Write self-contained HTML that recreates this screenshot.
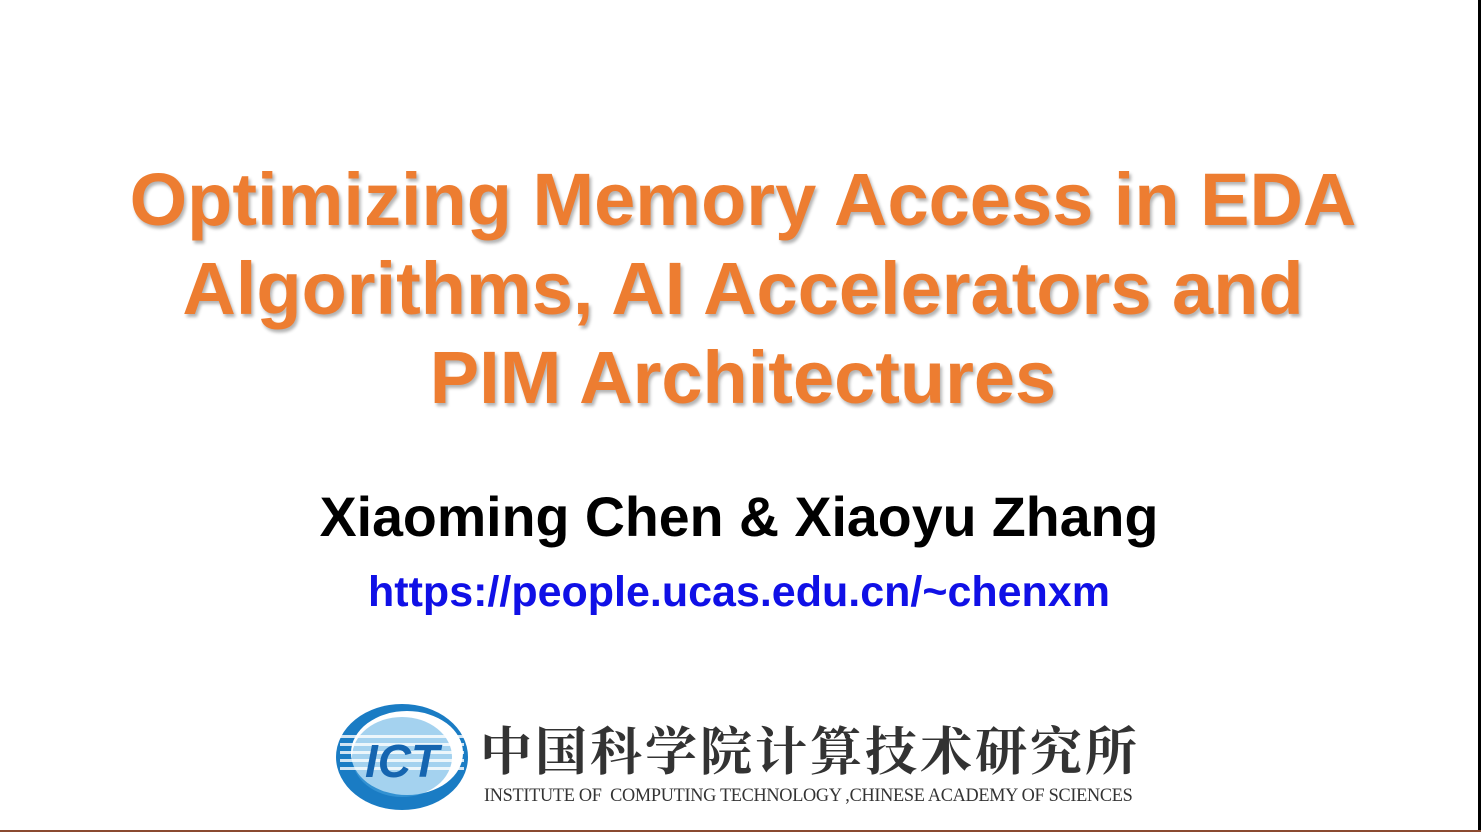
<!DOCTYPE html>
<html><head><meta charset="utf-8"><style>
body{margin:0;width:1481px;height:832px;background:#fff;position:relative;overflow:hidden;font-family:"Liberation Sans",Arial,sans-serif}
.t{position:absolute;left:0;width:1486px;text-align:center;font-weight:bold;color:#ED7D31;font-size:74px;line-height:80px;text-shadow:2px 3px 3px rgba(0,0,0,0.3);white-space:nowrap}
.a{position:absolute;left:0;width:1478px;text-align:center;font-weight:bold;white-space:nowrap}
</style></head><body>
<div style="position:absolute;right:0;top:0;width:3px;height:832px;background:#000"></div>
<div style="position:absolute;left:0;bottom:0;width:1481px;height:2px;background:#8a4a30"></div>
<div class="t" style="top:160px">Optimizing Memory Access in EDA</div>
<div class="t" style="top:249px">Algorithms, AI Accelerators and</div>
<div class="t" style="top:338px">PIM Architectures</div>
<div class="a" style="top:485px;font-size:55.5px;line-height:64px;color:#000">Xiaoming Chen &amp; Xiaoyu Zhang</div>
<div class="a" style="top:567px;font-size:43px;line-height:50px;color:#1010e6">https://people.ucas.edu.cn/~chenxm</div>
<svg style="position:absolute;left:335px;top:703px" width="134" height="108" viewBox="0 0 134 108">
<ellipse cx="67" cy="54" rx="66" ry="53" fill="#1a7cc4"/>
<ellipse cx="72" cy="50" rx="56" ry="42" fill="#fff"/>
<ellipse cx="67" cy="54" rx="50" ry="40" fill="#4aa6e0" opacity="0.5"/>
<g fill="#fff" opacity="0.8"><rect x="5" y="32" width="124" height="3"/><rect x="5" y="40" width="124" height="3"/><rect x="5" y="48" width="124" height="3"/><rect x="5" y="56" width="124" height="3"/><rect x="5" y="64" width="124" height="3"/></g>
<text x="67" y="74" text-anchor="middle" font-family="Liberation Sans" font-weight="bold" font-style="italic" font-size="46" fill="#1565b0">ICT</text>
</svg>
<div style="position:absolute;left:480px;top:710px;font-family:'Noto Serif CJK SC','WenQuanYi Zen Hei',serif;font-weight:bold;font-size:52px;letter-spacing:3px;color:#333;white-space:nowrap">中国科学院计算技术研究所</div>
<div style="position:absolute;left:484px;top:785px;font-family:'Liberation Serif',serif;font-size:19px;color:#333;transform:scaleX(0.96);transform-origin:0 0;white-space:nowrap;letter-spacing:-0.3px">INSTITUTE OF &nbsp;COMPUTING TECHNOLOGY ,CHINESE ACADEMY OF SCIENCES</div>
</body></html>
